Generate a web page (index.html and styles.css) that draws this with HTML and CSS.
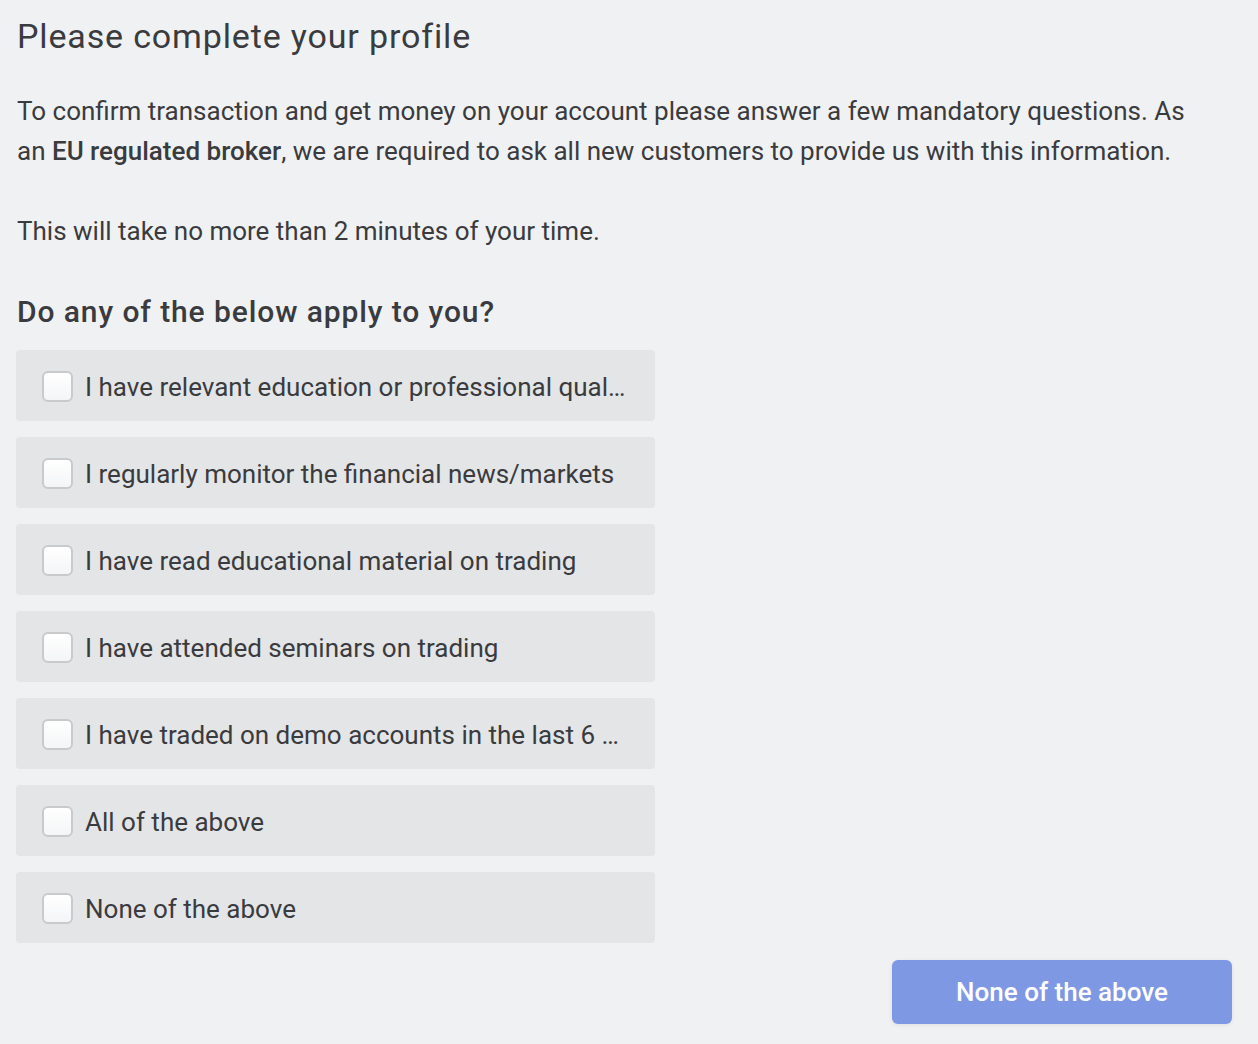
FILE: index.html
```html
<!DOCTYPE html>
<html lang="en">
<head>
<meta charset="utf-8">
<title>Please complete your profile</title>
<link rel="stylesheet" href="styles.css">
</head>
<body>
<main class="page">
  <h1 class="title">Please complete your profile</h1>
  <p class="intro">To confirm transaction and get money on your account please answer a few mandatory questions. As an <strong>EU regulated broker</strong>, we are required to ask all new customers to provide us with this information.</p>
  <p class="intro intro-time">This will take no more than 2 minutes of your time.</p>
  <h2 class="question">Do any of the below apply to you?</h2>
  <ul class="options">
    <li class="option"><span class="box"></span><span class="label">I have relevant education or professional qualifications in finance</span></li>
    <li class="option"><span class="box"></span><span class="label">I regularly monitor the financial news/markets</span></li>
    <li class="option"><span class="box"></span><span class="label">I have read educational material on trading</span></li>
    <li class="option"><span class="box"></span><span class="label">I have attended seminars on trading</span></li>
    <li class="option"><span class="box"></span><span class="label">I have traded on demo accounts in the last 6 months</span></li>
    <li class="option"><span class="box"></span><span class="label">All of the above</span></li>
    <li class="option"><span class="box"></span><span class="label">None of the above</span></li>
  </ul>
  <div class="actions">
    <button class="submit" type="button">None of the above</button>
  </div>
</main>
</body>
</html>
```

FILE: styles.css
```css
html, body {
  margin: 0;
  padding: 0;
  background: #f0f1f3;
}
body {
  font-family: Roboto, "Liberation Sans", sans-serif;
  color: #3a3b3e;
}
.page {
  padding: 0 26px 20px 17px;
}
.title {
  margin: 16px 0 0;
  font-size: 34px;
  letter-spacing: 0.85px;
  line-height: 40px;
  font-weight: 400;
}
.intro {
  margin: 35px 0 0;
  font-size: 26px;
  line-height: 40px;
  padding-right: 40px;
}
.intro strong {
  font-weight: 500;
}
.intro-time {
  margin-top: 40px;
}
.question {
  margin: 41px 0 0;
  font-size: 30px;
  letter-spacing: 0.9px;
  line-height: 40px;
  font-weight: 500;
}
.options {
  list-style: none;
  margin: 18px 0 0;
  padding: 0;
  width: 638px;
  display: flex;
  flex-direction: column;
  gap: 16px;
}
.option {
  height: 71px;
  box-sizing: border-box;
  background: #e4e5e7;
  border-radius: 4px;
  display: flex;
  align-items: center;
  gap: 12px;
  padding: 2px 24px 0 26px;
  margin-left: -1px;
  font-size: 26px;
}
.box {
  flex: none;
  width: 27px;
  height: 27px;
  border: 2px solid #c9cacc;
  border-radius: 6px;
  background: linear-gradient(#ffffff, #f4f5f7);
}
.label {
  white-space: nowrap;
  overflow: hidden;
  text-overflow: ellipsis;
  min-width: 0;
}
.actions {
  display: flex;
  justify-content: flex-end;
  margin-top: 17px;
}
.submit {
  width: 340px;
  height: 64px;
  border: none;
  border-radius: 6px;
  background: #7e98e4;
  color: #ffffff;
  font-family: Roboto, "Liberation Sans", sans-serif;
  font-size: 26px;
  font-weight: 500;
  box-shadow: 0 1px 4px rgba(0, 0, 0, 0.08);
}
```
